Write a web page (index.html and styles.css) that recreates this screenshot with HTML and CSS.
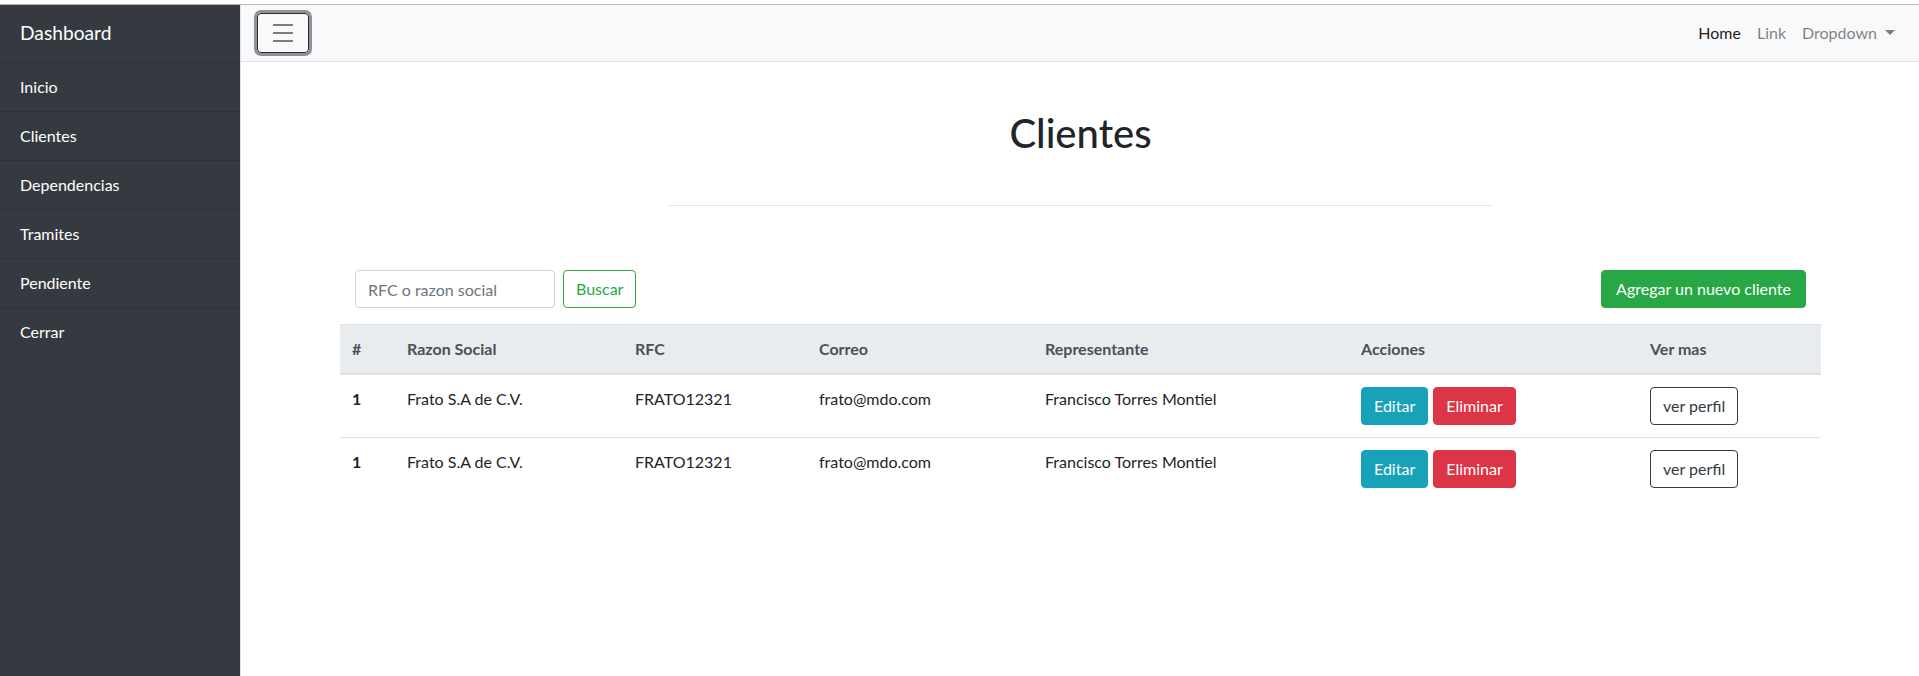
FILE: index.html
```html
<!DOCTYPE html>
<html lang="es">
<head>
<meta charset="utf-8">
<title>Clientes</title>
<link rel="stylesheet" href="styles.css">
</head>
<body>
<div class="topline"></div>
<div class="wrapper">
  <aside class="sidebar">
    <div class="sidebar-heading">Dashboard</div>
    <nav class="side-list">
      <a class="side-item" href="#">Inicio</a>
      <a class="side-item" href="#">Clientes</a>
      <a class="side-item" href="#">Dependencias</a>
      <a class="side-item" href="#">Tramites</a>
      <a class="side-item" href="#">Pendiente</a>
      <a class="side-item" href="#">Cerrar</a>
    </nav>
  </aside>
  <div class="page">
    <nav class="navbar">
      <button class="toggler" type="button" aria-label="Toggle">
        <svg class="toggler-icon" width="26" height="30" viewBox="0 0 26 30"><path d="M3 7h20M3 15h20M3 23h20" stroke="rgba(0,0,0,0.5)" stroke-width="2" fill="none"/></svg>
      </button>
      <ul class="nav">
        <li><a class="nav-link active" href="#">Home</a></li>
        <li><a class="nav-link" href="#">Link</a></li>
        <li><a class="nav-link" href="#">Dropdown<span class="caret"></span></a></li>
      </ul>
    </nav>
    <main class="content">
      <h1 class="title">Clientes</h1>
      <hr class="divider">
      <div class="toolbar">
        <form class="search">
          <input class="form-control" type="search" placeholder="RFC o razon social">
          <button class="btn btn-outline-success" type="button">Buscar</button>
        </form>
        <button class="btn btn-success" type="button">Agregar un nuevo cliente</button>
      </div>
      <table class="table">
        <colgroup>
          <col class="c-num"><col class="c-razon"><col class="c-rfc"><col class="c-correo"><col class="c-rep"><col class="c-acc"><col class="c-ver">
        </colgroup>
        <thead>
          <tr><th>#</th><th>Razon Social</th><th>RFC</th><th>Correo</th><th>Representante</th><th>Acciones</th><th>Ver mas</th></tr>
        </thead>
        <tbody>
          <tr>
            <th>1</th><td>Frato S.A de C.V.</td><td>FRATO12321</td><td>frato@mdo.com</td><td>Francisco Torres Montiel</td>
            <td><button class="btn btn-info" type="button">Editar</button><button class="btn btn-danger" type="button">Eliminar</button></td>
            <td><button class="btn btn-outline-dark" type="button">ver perfil</button></td>
          </tr>
          <tr>
            <th>1</th><td>Frato S.A de C.V.</td><td>FRATO12321</td><td>frato@mdo.com</td><td>Francisco Torres Montiel</td>
            <td><button class="btn btn-info" type="button">Editar</button><button class="btn btn-danger" type="button">Eliminar</button></td>
            <td><button class="btn btn-outline-dark" type="button">ver perfil</button></td>
          </tr>
        </tbody>
      </table>
    </main>
  </div>
</div>
</body>
</html>
```
FILE: styles.css
```css
* { box-sizing: border-box; }
html, body { margin: 0; padding: 0; }
body {
  font-family: Lato, "Open Sans", "Liberation Sans", sans-serif;
  font-size: 16px;
  line-height: 1.5;
  color: #212529;
  background: #fff;
}
.topline {
  height: 5px;
  background: #fff;
  border-bottom: 1px solid #b8b8b8;
}
.wrapper {
  display: flex;
  height: calc(100vh - 5px);
  overflow: hidden;
}
.sidebar {
  width: 241px;
  flex: none;
  background: #343a40;
  border-right: 1px solid #dee2e6;
  color: #fff;
}
.sidebar-heading {
  padding: 14px 20px;
  font-size: 19.2px;
  line-height: 1.5;
}
.side-list { display: flex; flex-direction: column; }
.side-item {
  display: block;
  padding: 12px 20px;
  border-top: 1px solid rgba(0,0,0,0.125);
  color: #fff;
  text-decoration: none;
  line-height: 24px;
}
.page { flex: 1; min-width: 0; }
.navbar {
  display: flex;
  align-items: center;
  justify-content: space-between;
  padding: 8px 16px;
  background: #f8f9fa;
  border-bottom: 1px solid #dee2e6;
}
.toggler {
  width: 52px;
  height: 40px;
  padding: 0;
  background: transparent;
  border: 1px solid #2b2b2b;
  border-radius: 4px;
  box-shadow: 0 0 0 3px #8e9297;
  display: flex;
  align-items: center;
  justify-content: center;
}
.toggler-icon { display: block; }
.nav {
  display: flex;
  list-style: none;
  margin: 0;
  padding: 0;
}
.nav-link {
  display: block;
  padding: 8px;
  line-height: 24px;
  color: rgba(0,0,0,0.5);
  text-decoration: none;
}
.nav-link.active { color: rgba(0,0,0,0.9); }
.caret {
  display: inline-block;
  margin-left: 8px;
  vertical-align: 4px;
  border-top: 5px solid;
  border-right: 5px solid transparent;
  border-left: 5px solid transparent;
}
.content {
  padding: 47px 98px 40px 99px;
}
.title {
  margin: 0;
  text-align: center;
  font-size: 40px;
  font-weight: 500;
  line-height: 1.2;
}
.divider {
  width: 825px;
  margin: 48px auto 64px;
  border: 0;
  border-top: 1px solid rgba(0,0,0,0.1);
}
.toolbar {
  display: flex;
  justify-content: space-between;
  align-items: center;
  padding: 0 15px;
  margin-bottom: 16px;
}
.search { display: flex; margin: 0; }
.form-control {
  width: 200px;
  height: 38px;
  padding: 6px 12px;
  font: inherit;
  color: #495057;
  border: 1px solid #ced4da;
  border-radius: 4px;
  margin-right: 8px;
}
.form-control::placeholder { color: #6c757d; }
.btn {
  display: inline-block;
  font: inherit;
  line-height: 24px;
  padding: 6px 12px;
  border: 1px solid transparent;
  border-radius: 4px;
  background: transparent;
  cursor: pointer;
}
.btn-outline-success { color: #28a745; border-color: #28a745; }
.btn-success { color: #fff; background: #28a745; border-color: #28a745; padding: 6px 14px; }
.btn-info { color: #fff; background: #17a2b8; border-color: #17a2b8; margin-right: 5px; }
.btn-danger { color: #fff; background: #dc3545; border-color: #dc3545; }
.btn-outline-dark { color: #343a40; border-color: #343a40; }
.table {
  width: 100%;
  table-layout: fixed;
  border-collapse: collapse;
}
.c-num { width: 55px; }
.c-razon { width: 228px; }
.c-rfc { width: 184px; }
.c-correo { width: 226px; }
.c-rep { width: 316px; }
.c-acc { width: 289px; }
.c-ver { width: 183px; }
.table th, .table td {
  padding: 12px;
  vertical-align: top;
  text-align: left;
  border-top: 1px solid #dee2e6;
  line-height: 24px;
}
.table th { font-weight: 700; }
.table thead th {
  background: #e9ecef;
  color: #495057;
  border-bottom: 2px solid #dee2e6;
}
.table tbody tr:first-child th, .table tbody tr:first-child td { border-top: 0; }
```
